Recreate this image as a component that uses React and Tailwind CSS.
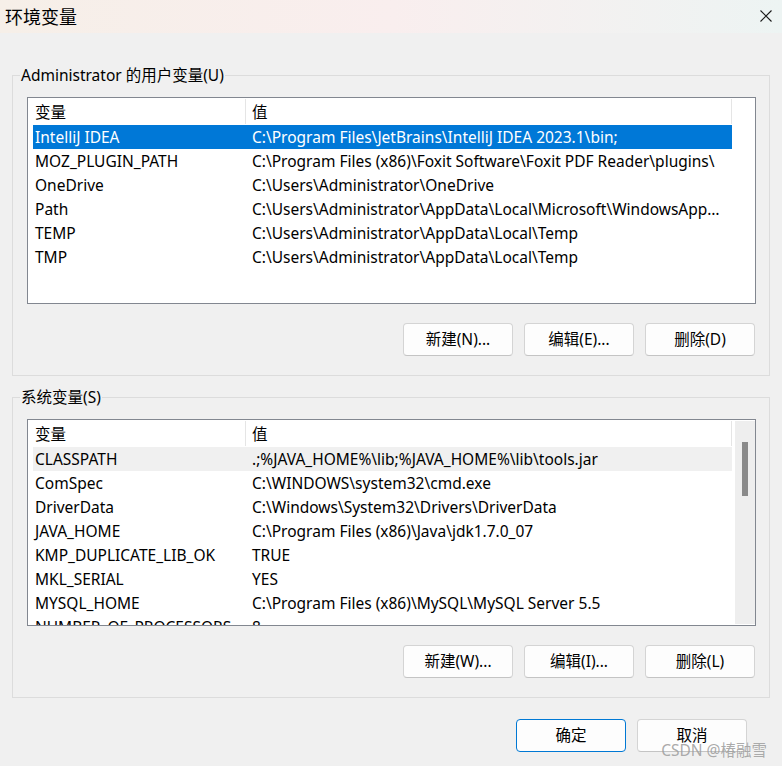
import React from "react";

const FONT = { fontFamily: '"Noto Sans", "Noto Sans CJK SC", sans-serif' };

const userVars = [
  ["IntelliJ IDEA", "C:\\Program Files\\JetBrains\\IntelliJ IDEA 2023.1\\bin;"],
  ["MOZ_PLUGIN_PATH", "C:\\Program Files (x86)\\Foxit Software\\Foxit PDF Reader\\plugins\\"],
  ["OneDrive", "C:\\Users\\Administrator\\OneDrive"],
  ["Path", "C:\\Users\\Administrator\\AppData\\Local\\Microsoft\\WindowsApps;C:\\Users"],
  ["TEMP", "C:\\Users\\Administrator\\AppData\\Local\\Temp"],
  ["TMP", "C:\\Users\\Administrator\\AppData\\Local\\Temp"],
];

const sysVars = [
  ["CLASSPATH", ".;%JAVA_HOME%\\lib;%JAVA_HOME%\\lib\\tools.jar"],
  ["ComSpec", "C:\\WINDOWS\\system32\\cmd.exe"],
  ["DriverData", "C:\\Windows\\System32\\Drivers\\DriverData"],
  ["JAVA_HOME", "C:\\Program Files (x86)\\Java\\jdk1.7.0_07"],
  ["KMP_DUPLICATE_LIB_OK", "TRUE"],
  ["MKL_SERIAL", "YES"],
  ["MYSQL_HOME", "C:\\Program Files (x86)\\MySQL\\MySQL Server 5.5"],
  ["NUMBER_OF_PROCESSORS", "8"],
];

function Header() {
  return (
    <div className="flex h-[27px] w-[699px] shrink-0 bg-white text-[15.5px] text-black">
      <div className="my-[1px] flex w-[213px] items-center border-r border-[#e5e5e5] pl-[2px] pt-[2px]">变量</div>
      <div className="my-[1px] flex flex-1 items-center border-r border-[#e5e5e5] pl-[6px] pt-[2px]">值</div>
    </div>
  );
}

function Row({ name, value, selected, hover }) {
  const bg = selected ? "bg-[#0078d7] text-white" : hover ? "bg-[#f0f0f0] text-black" : "bg-white text-black";
  return (
    <div className={`flex h-[24px] w-[699px] shrink-0 items-center pt-[2px] text-[15.5px] ${bg}`}>
      <div className="w-[213px] shrink-0 truncate whitespace-nowrap pl-[2px]">{name}</div>
      <div className="min-w-0 flex-1 truncate whitespace-nowrap pl-[6px] pr-[6px]">{value}</div>
    </div>
  );
}

function Btn({ children, primary }) {
  return (
    <button
      className={`flex h-[33px] w-[110px] items-center justify-center rounded-[4px] text-[15.5px] text-black ${
        primary
          ? "border border-[#0078d4] bg-[#fdfdfd]"
          : "border border-[#d4d4d4] border-b-[#c4c4c4] bg-[#fdfdfd]"
      }`}
    >
      {children}
    </button>
  );
}

function Group({ title, rows, scroll, buttons, className }) {
  return (
    <div className={`relative mx-[12px] h-[301px] border border-[#dcdcdc] ${className}`}>
      <span className="absolute left-[7px] top-[-11px] bg-[#f0f0f0] px-[1px] text-[15.5px] leading-[20px] text-black">
        {title}
      </span>
      <div className="ml-[14px] mt-[21px] flex h-[207px] w-[729px] overflow-hidden border border-[#828790] bg-white">
        <div className="flex min-w-0 flex-1 flex-col overflow-hidden pl-[5px]">
          <Header />
          {rows.map((r, i) => (
            <Row key={r[0]} name={r[0]} value={r[1]} selected={!scroll && i === 0} hover={scroll && i === 0} />
          ))}
        </div>
        {scroll && (
          <div className="my-[1px] ml-[1px] flex w-[20px] shrink-0 justify-center bg-[#eeeeee] pt-[21px]">
            <div className="h-[54px] w-[6px] bg-[#8a8a8a]" />
          </div>
        )}
      </div>
      <div className="ml-[14px] mt-[19px] flex w-[728px] justify-end gap-[11px]">
        {buttons.map((b) => (
          <Btn key={b}>{b}</Btn>
        ))}
      </div>
    </div>
  );
}

export default function App() {
  return (
    <div className="relative h-[766px] w-[782px] overflow-hidden bg-[#f0f0f0]" style={FONT}>
      <div className="flex h-[33px] items-center justify-between bg-gradient-to-r from-[#f6efe8] via-[#f9eeee] to-[#edf4f3] pl-[5px] pr-[10px]">
        <span className="text-[18px] leading-[24px] text-black">环境变量</span>
        <svg width="12" height="12" viewBox="0 0 12 12" className="mt-[-2px]">
          <path d="M0.5 0.5 L11.5 11.5 M11.5 0.5 L0.5 11.5" stroke="#1a1a1a" strokeWidth="1.1" fill="none" />
        </svg>
      </div>

      <Group
        className="mt-[42px]"
        title="Administrator 的用户变量(U)"
        rows={userVars}
        buttons={["新建(N)...", "编辑(E)...", "删除(D)"]}
      />
      <Group
        className="mt-[21px]"
        title="系统变量(S)"
        rows={sysVars}
        scroll
        buttons={["新建(W)...", "编辑(I)...", "删除(L)"]}
      />

      <div className="mt-[21px] flex justify-end gap-[11px] pr-[35px]">
        <Btn primary>确定</Btn>
        <Btn>取消</Btn>
      </div>

      <span className="absolute bottom-[7px] right-[15px] text-[15.5px] leading-[18px] text-[#a0a0a0]/90">
        CSDN @椿融雪
      </span>
    </div>
  );
}
